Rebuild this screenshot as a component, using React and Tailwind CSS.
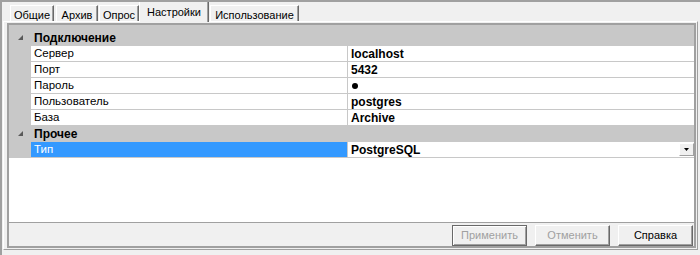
import { useState } from "react"

const tabs = [
  { id: "common", label: "Общие", w: "w-[44px]", ml: "ml-0" },
  { id: "archive", label: "Архив", w: "w-[42px]", ml: "ml-[2px]" },
  { id: "poll", label: "Опрос", w: "w-[40px]", ml: "ml-[1px]" },
  { id: "settings", label: "Настройки", w: "w-[70px]", ml: "ml-0" },
  { id: "usage", label: "Использование", w: "w-[89px]", ml: "ml-[1px]" },
]

const rows = [
  { kind: "cat", name: "Подключение" },
  { name: "Сервер", value: "localhost" },
  { name: "Порт", value: "5432" },
  { name: "Пароль", value: "", dot: true },
  { name: "Пользователь", value: "postgres" },
  { name: "База", value: "Archive" },
  { kind: "cat", name: "Прочее" },
  { name: "Тип", value: "PostgreSQL", selected: true, dropdown: true },
]

function Glyph() {
  return (
    <svg width="6" height="6" viewBox="0 0 6 6" className="block">
      <polygon points="5,0 5,5 0,5" fill="#595959" />
    </svg>
  )
}

function Button({ children, disabled, isDefault }) {
  return (
    <div
      className={`w-[75px] h-[21px] flex items-center justify-center bg-[#f0f0f0] ${
        isDefault
          ? "border border-[#696969] shadow-[inset_1px_1px_#ffffff,inset_-1px_-1px_#a0a0a0]"
          : "border-t border-l border-white border-r border-b border-r-[#696969] border-b-[#696969] shadow-[inset_-1px_-1px_#a0a0a0]"
      } ${disabled ? "text-[#a0a0a0]" : "text-black"}`}
    >
      {children}
    </div>
  )
}

export default function App() {
  const [active, setActive] = useState("settings")

  return (
    <div className="w-[700px] h-[255px] bg-[#f0f0f0] border-t-2 border-l-2 border-[#a0a0a0] flex flex-col font-['Liberation_Sans',Arial,sans-serif] text-[11px] text-black leading-none overflow-hidden">
      <div className="h-[19px] flex items-end pl-[8px] shrink-0">
        {tabs.map(t => {
          const sel = t.id === active
          return (
            <div
              key={t.id}
              onClick={() => setActive(t.id)}
              className={`${t.w} ${t.ml} flex justify-center bg-[#f0f0f0] border-t border-l border-white border-r border-r-[#696969] shadow-[inset_-1px_0_#a0a0a0] ${
                sel ? "h-[21px] mb-[-1px] relative z-10 pt-[5px]" : "h-[16px] pt-[4px]"
              }`}
            >
              {t.label}
            </div>
          )
        })}
      </div>

      <div className="h-[229px] ml-[1px] mr-[2px] border-t border-l border-white border-r border-b border-r-[#a0a0a0] border-b-[#a0a0a0] pt-[1px] pl-[3px] pr-[1px] pb-[1px] flex shrink-0">
        <div className="flex-1 border-2 border-[#a0a0a0] flex flex-col">
          <div className="h-[198px] bg-white border-b border-[#a0a0a0] flex flex-col text-[11.5px]">
            <div className="h-[5px] bg-[#c8c8c8]" />
            {rows.map((r, i) =>
              r.kind === "cat" ? (
                <div key={i} className="h-[16px] bg-[#c8c8c8] flex items-center">
                  <div className="w-[22px] flex justify-center pl-[2px]">
                    <Glyph />
                  </div>
                  <span className="pl-[3px] font-bold text-[12px]">{r.name}</span>
                </div>
              ) : (
                <div key={i} className="h-[16px] flex">
                  <div className="w-[22px] bg-[#c8c8c8]" />
                  <div
                    className={`w-[317px] border-r border-b border-[#c8c8c8] flex items-center pl-[3px] ${
                      r.selected ? "bg-[#3399ff] text-white" : ""
                    }`}
                  >
                    {r.name}
                  </div>
                  <div className="flex-1 border-b border-[#c8c8c8] flex items-center pl-[3px] font-bold text-[12px] relative">
                    {r.dot ? <span className="w-[6px] h-[6px] rounded-full bg-black ml-[1px]" /> : r.value}
                    {r.dropdown && (
                      <div className="absolute right-0 top-[1px] w-[15px] h-[13px] bg-[#f0f0f0] border-t border-l border-white border-r border-b border-r-[#a0a0a0] border-b-[#a0a0a0] flex items-center justify-center">
                        <svg width="5" height="3" viewBox="0 0 5 3" className="block">
                          <polygon points="0,0 5,0 2.5,3" fill="#000" />
                        </svg>
                      </div>
                    )}
                  </div>
                </div>
              )
            )}
          </div>
          <div className="flex-1 flex justify-end items-start pt-[2px] pr-[1px] gap-[8px]">
            <Button disabled isDefault>Применить</Button>
            <Button disabled>Отменить</Button>
            <Button>Справка</Button>
          </div>
        </div>
      </div>
    </div>
  )
}
